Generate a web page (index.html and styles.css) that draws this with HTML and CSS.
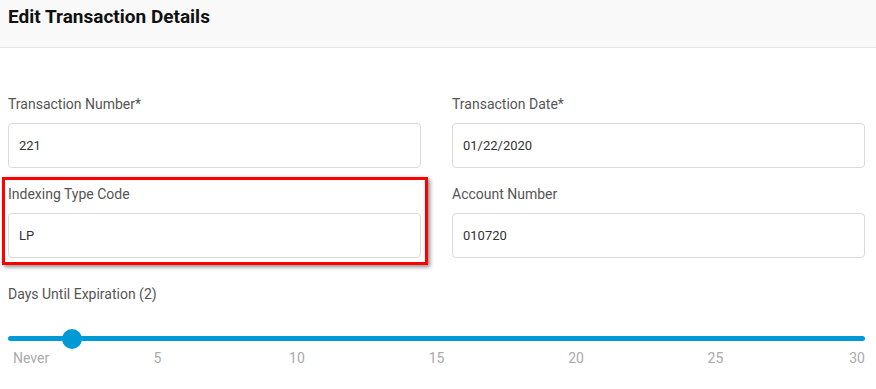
FILE: index.html
```html
<!DOCTYPE html>
<html>
<head>
<link rel="stylesheet" href="styles.css">
</head>

<body>
<div class="header">
    <h1 class="title">Edit Transaction Details</h1>
</div>

<div class="form">
    <div class="field">
        <label class="label">Transaction Number*</label>
        <div class="input">221</div>
    </div>
    <div class="field">
        <label class="label">Transaction Date*</label>
        <div class="input">01/22/2020</div>
    </div>
    <div class="field highlight">
        <label class="label">Indexing Type Code</label>
        <div class="input">LP</div>
    </div>
    <div class="field">
        <label class="label">Account Number</label>
        <div class="input">010720</div>
    </div>

    <div class="slider-field">
        <label class="label">Days Until Expiration (2)</label>
        <div class="slider">
            <div class="track"></div>
            <div class="thumb" style="left: 6.3%"></div>
        </div>
        <div class="ticks">
            <span class="tick first" style="left: 0%">Never</span>
            <span class="tick" style="left: 16.667%">5</span>
            <span class="tick" style="left: 33.333%">10</span>
            <span class="tick" style="left: 50%">15</span>
            <span class="tick" style="left: 66.667%">20</span>
            <span class="tick" style="left: 83.333%">25</span>
            <span class="tick last" style="left: 100%">30</span>
        </div>
    </div>
</div>
</body>
</html>
```

FILE: styles.css
```css
body {
  margin: 0;
  font-family: Roboto, "Liberation Sans", sans-serif;
  background: #fff;
  color: #444;
}

.header {
  height: 47px;
  background: #f9f9f9;
  border-bottom: 1px solid #e6e6e6;
  padding: 0 8px;
}

.title {
  margin: 0;
  padding-top: 4px;
  font-size: 19px;
  line-height: 26px;
  font-weight: 700;
  color: #111;
}

.form {
  display: grid;
  grid-template-columns: 413px 413px;
  column-gap: 31px;
  row-gap: 16px;
  padding: 46px 11px 0 8px;
}

.field {
  position: relative;
  display: flex;
  flex-direction: column;
  gap: 9px;
}

.label {
  font-size: 14px;
  line-height: 20px;
  color: #555;
}

.input {
  height: 43px;
  border: 1px solid #dadada;
  border-radius: 4px;
  padding: 0 10px;
  display: flex;
  align-items: center;
  font-size: 13px;
  color: #333;
}

.highlight::after {
  content: "";
  position: absolute;
  top: -7px;
  left: -6px;
  right: -7px;
  bottom: -7px;
  border: 3px solid #f00;
  box-shadow: 2px 2px 4px rgba(0, 0, 0, 0.45);
  pointer-events: none;
}

.slider-field {
  grid-column: 1 / 3;
  margin-top: 10px;
}

.slider {
  position: relative;
  margin-top: 32px;
  height: 5px;
}

.track {
  height: 5px;
  border-radius: 3px;
  background: #009ad7;
}

.thumb {
  position: absolute;
  top: -7.5px;
  width: 20px;
  height: 20px;
  border-radius: 50%;
  background: #009ad7;
}

.ticks {
  position: relative;
  height: 18px;
  margin: 9px 10px 0 10px;
  font-size: 14px;
  line-height: 16px;
  color: #aaa;
}

.tick {
  position: absolute;
  top: 0;
  transform: translateX(-50%);
}

.tick.first {
  transform: translateX(-5px);
}

.tick.last {
  transform: translateX(calc(-100% + 10px));
}
```
